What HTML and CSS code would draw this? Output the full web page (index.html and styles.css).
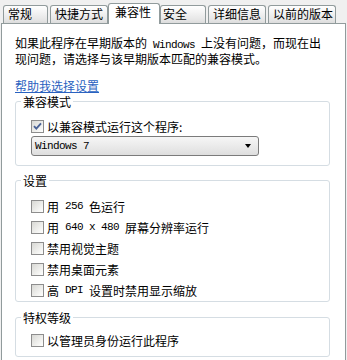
FILE: index.html
```
<!DOCTYPE html>
<html lang="zh-CN">
<head>
<meta charset="utf-8">
<link rel="stylesheet" href="styles.css">
</head>
<body>
<div class="tabs">
  <div class="tab t1">常规</div>
  <div class="tab t2">快捷方式</div>
  <div class="tab sel">兼容性</div>
  <div class="tab t4">安全</div>
  <div class="tab t5">详细信息</div>
  <div class="tab t6">以前的版本</div>
</div>
<div class="panel">
  <p class="intro">如果此程序在早期版本的<span class="mono"> Windows </span>上没有问题，而现在出<br>现问题，请选择与该早期版本匹配的兼容模式。</p>
  <a class="help" href="#">帮助我选择设置</a>

  <fieldset class="group g1">
    <legend>兼容模式</legend>
    <div class="row"><span class="cb checked"><svg width="11" height="11" viewBox="0 0 11 11"><path d="M2 5.2 L4.3 7.6 L9 2.4" fill="none" stroke="#4a6296" stroke-width="1.9"/></svg></span>以兼容模式运行这个程序:</div>
    <div class="select"><span class="mono">Windows 7</span><span class="arrow"></span></div>
  </fieldset>

  <fieldset class="group g2">
    <legend>设置</legend>
    <div class="row"><span class="cb"></span>用<span class="mono"> 256 </span>色运行</div>
    <div class="row"><span class="cb"></span>用<span class="mono"> 640 x 480 </span>屏幕分辨率运行</div>
    <div class="row"><span class="cb"></span>禁用视觉主题</div>
    <div class="row"><span class="cb"></span>禁用桌面元素</div>
    <div class="row"><span class="cb"></span>高<span class="mono"> DPI </span>设置时禁用显示缩放</div>
  </fieldset>

  <fieldset class="group g3">
    <legend>特权等级</legend>
    <div class="row"><span class="cb"></span>以管理员身份运行此程序</div>
  </fieldset>
</div>
</body>
</html>
```
FILE: styles.css
```
html, body {
  margin: 0;
  padding: 0;
}
body {
  background: #f0f0f0;
  font-family: "Noto Sans CJK SC", "Liberation Sans", sans-serif;
  font-size: 12px;
  line-height: 13px;
  color: #000;
  width: 347px;
  height: 360px;
  overflow: hidden;
}
.mono {
  font-family: "Liberation Mono", "DejaVu Sans Mono", monospace;
  font-size: 11px;
  letter-spacing: -0.6px;
  white-space: pre;
}
.tabs {
  display: flex;
  align-items: flex-end;
  height: 23px;
  padding-left: 3px;
}
.tab {
  box-sizing: border-box;
  height: 18px;
  border: 1px solid #919b9c;
  border-bottom: none;
  border-radius: 3px 3px 0 0;
  background: linear-gradient(#ffffff, #e6e6e6 80%, #dcdcdc);
  padding-left: 4px;
  line-height: 16px;
  white-space: nowrap;
  flex: none;
}
.t1 { width: 45px; }
.t2 { width: 58px; margin-left: 2px; }
.sel {
  width: 52px;
  height: 21px;
  margin-bottom: -1px;
  background: #fff;
  padding-left: 6px;
  line-height: 15px;
  z-index: 1;
}
.t4 { width: 46px; padding-left: 2px; }
.t5 { width: 58px; margin-left: 2px; }
.t6 { width: 68px; margin-left: 2px; }
.panel {
  margin-left: 1px;
  width: 345px;
  height: 337px;
  box-sizing: border-box;
  border: 1px solid #919b9c;
  border-bottom: none;
  background: #fff;
  padding: 12px 15px 0 13px;
}
.intro {
  margin: 0;
  white-space: nowrap;
}
.help {
  display: block;
  width: max-content;
  margin-top: 14px;
  color: #2a62c0;
  text-decoration: underline;
}
.group {
  box-sizing: border-box;
  width: 315px;
  min-width: 0;
  margin: 3px 0 0;
  padding: 8px 0 9px 15px;
  border: 1px solid #d5dde3;
  border-radius: 3px;
}
.group legend {
  padding: 0 2px;
  margin-left: -10px;
  line-height: 13px;
}
.row {
  display: flex;
  align-items: center;
  height: 20px;
  white-space: nowrap;
}
.g2 {
  margin-top: 8px;
  padding-top: 9px;
  padding-bottom: 0;
}
.g3 {
  margin-top: 9px;
  padding-top: 6px;
  padding-bottom: 5px;
}
.g2 .row, .g3 .row {
  height: 21px;
}
.cb {
  flex: none;
  box-sizing: border-box;
  width: 13px;
  height: 13px;
  margin-right: 3px;
  border: 1px solid #8d8d8d;
  background: linear-gradient(135deg, #d8d8d4, #f6f6f4 75%, #ffffff);
  display: flex;
  align-items: center;
  justify-content: center;
}
.cb svg {
  display: block;
}
.select {
  box-sizing: border-box;
  width: 228px;
  height: 20px;
  border: 1px solid #7b7b7b;
  border-radius: 3px;
  background: linear-gradient(#f6f6f6, #e8e8e8 60%, #dedede);
  display: flex;
  align-items: center;
  justify-content: space-between;
  padding: 0 7px 0 3px;
}
.arrow {
  width: 0;
  height: 0;
  border-top: 4px solid #000;
  border-left: 3.5px solid transparent;
  border-right: 3.5px solid transparent;
}
```
